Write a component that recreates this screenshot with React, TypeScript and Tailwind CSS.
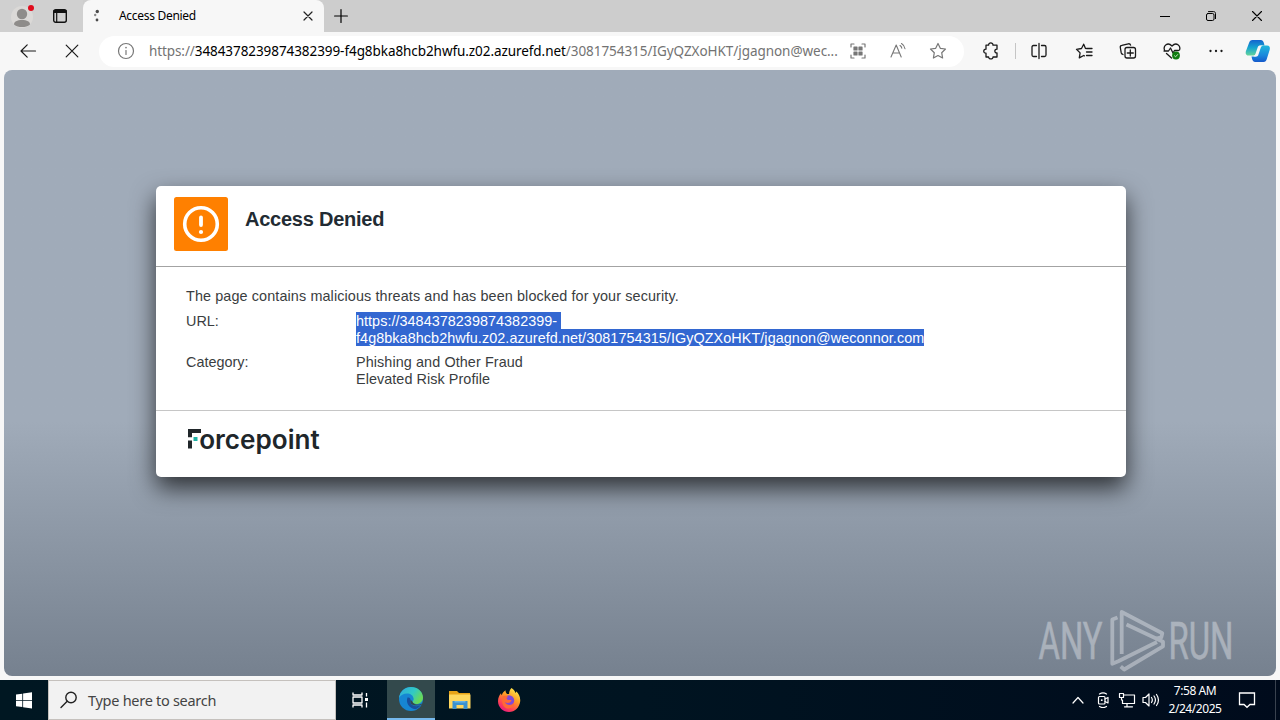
import type { ReactNode } from "react";

type IconProps = { className?: string; children: ReactNode; size?: number; stroke?: number };

function Icon({ className = "", children, size = 20, stroke = 1.2 }: IconProps) {
  return (
    <svg
      width={size}
      height={size}
      viewBox={`0 0 ${size} ${size}`}
      fill="none"
      stroke="currentColor"
      strokeWidth={stroke}
      strokeLinecap="round"
      strokeLinejoin="round"
      className={`block shrink-0 ${className}`}
    >
      {children}
    </svg>
  );
}

function TabStrip() {
  return (
    <div className="flex h-8 bg-[#cdcdcd]">
      <div className="flex w-[83px] items-center bg-[#d0d0d0] pl-[10px]">
        <svg width="26" height="28" viewBox="0 0 26 28" className="block">
          <circle cx="12" cy="15" r="11" fill="#dbd9d7" />
          <circle cx="12" cy="12" r="5.200" fill="#8e8c8a" />
          <path d="M4 22.500c0-3 3-4.500 8-4.500s8 1.500 8 4.500c-2 2-5 2.600-8 2.600s-6-.6-8-2.600z" fill="#8e8c8a" />
          <circle cx="21" cy="6" r="3" fill="#e00b1c" />
        </svg>
        <svg width="16" height="16" viewBox="0 0 16 16" className="ml-4 block" fill="none" stroke="#111">
          <rect x="1.700" y="1.700" width="12.600" height="12.600" rx="2" strokeWidth="1.400" />
          <path d="M1.500 3.500h13" strokeWidth="3" />
          <path d="M4.700 5v9" strokeWidth="1.200" />
        </svg>
      </div>
      <div className="flex w-[241px] items-center rounded-t-lg bg-[#f7f7f7] pl-[10px] pr-[11px]">
        <svg width="8" height="14" viewBox="0 0 8 14" className="block" fill="#4a4a4a">
          <circle cx="4.300" cy="2.500" r="1.700" />
          <circle cx="2.200" cy="6" r="1.200" fill="#888" />
          <circle cx="4" cy="11" r="1.400" />
        </svg>
        <span className="ml-[18px] flex-1 text-[12px] tracking-[-0.3px] text-black">Access Denied</span>
        <Icon size={10} stroke={1.2} className="text-[#222]">
          <path d="M1 1l8 8M9 1L1 9" />
        </Icon>
      </div>
      <Icon size={14} stroke={1.2} className="ml-[10px] mt-[9px] text-black">
        <path d="M7 .6v12.800M.6 7h12.800" />
      </Icon>
      <div className="ml-auto flex items-center gap-9 pr-[18px] text-black">
        <Icon size={10} stroke={1}>
          <path d="M0 5.500h10" />
        </Icon>
        <Icon size={10} stroke={1}>
          <rect x=".5" y="2.500" width="7.500" height="7" rx="1.500" />
          <path d="M2.500 .6h5c1.300 0 2 .7 2 2v5" />
        </Icon>
        <Icon size={10} stroke={1.1}>
          <path d="M.5 .5l9 9M9.500 .5l-9 9" />
        </Icon>
      </div>
    </div>
  );
}

function AddressBar() {
  return (
    <div className="ml-[19px] flex h-[31px] w-[865px] items-center rounded-full bg-white pl-[18px] pr-4 text-[#777]">
      <Icon size={18} stroke={1.2}>
        <circle cx="9" cy="9" r="7.500" />
        <path d="M9 8.500v4" />
        <path d="M9 5.600v.1" strokeWidth="1.600" />
      </Icon>
      <div className="ml-[14px] w-[692px] whitespace-nowrap text-[13.500px] leading-5 text-[#737373]">
        <span className="tracking-[-0.1px]">https://</span>
        <span className="tracking-[-0.07px] text-black">3484378239874382399-f4g8bka8hcb2hwfu.z02.azurefd.net</span>
        <span className="tracking-[-0.05px]">/3081754315/IGyQZXoHKT/jgagnon@wec...</span>
      </div>
      <Icon size={16} stroke={1.2} className="ml-[9px]">
        <path d="M1 4V1h3M12 1h3v3M15 12v3h-3M4 15H1v-3" />
        <path d="M4 4h3v3H4zM9 4h3v3H9zM4 9h3v3H4zM9 9h3v3H9z" fill="currentColor" />
      </Icon>
      <Icon size={18} stroke={1.1} className="ml-6">
        <path d="M1 15L6.200 3l5 12M2.800 11h6.700" />
        <path d="M10 3.500c1 .7 1.600 1.500 1.800 2.700M11.500 1.500c2 1.200 3.200 3 3.500 5.200" />
      </Icon>
      <Icon size={18} stroke={1.2} className="ml-[21px]">
        <path d="M9 1.500l2.300 4.800 5.200.7-3.800 3.700.9 5.300L9 13.500 4.400 16l.9-5.300L1.500 7l5.200-.7z" />
      </Icon>
    </div>
  );
}

function CopilotIcon() {
  return (
    <svg width="26" height="24" viewBox="0 0 26 24" className="block">
      <defs>
        <linearGradient id="cp1" x1="0" y1="0" x2="0" y2="1">
          <stop offset="0" stopColor="#1464cf" />
          <stop offset=".5" stopColor="#16a5cf" />
          <stop offset="1" stopColor="#67d59a" />
        </linearGradient>
        <linearGradient id="cp2" x1="0" y1="0" x2="0" y2="1">
          <stop offset="0" stopColor="#20b8dc" />
          <stop offset=".6" stopColor="#1a87dc" />
          <stop offset="1" stopColor="#1559cb" />
        </linearGradient>
      </defs>
      <path d="M7.500 1h8.200c2 0 2.800 1.500 3.200 3l.6 2.500h-3c-2 0-2.600 1-3.100 2.600l-2 5c-.6 1.800-1.500 2.500-3.100 2.500H4c-2.500 0-3.900-1.700-3.200-4.200L4 4C4.600 2.100 5.600 1 7.500 1z" fill="url(#cp1)" />
      <path d="M18.500 23h-8.200c-2 0-2.800-1.500-3.200-3l-.6-2.400h3c2 0 2.600-1 3.100-2.600l2-6c.6-1.800 1.500-2.500 3.100-2.500H22c2.500 0 3.400 1.700 2.700 4.200L21.800 20c-.6 1.900-1.400 3-3.300 3z" fill="url(#cp2)" />
      <path d="M10.500 14.800L12.800 8c.5-1 1.100-1.500 2.200-1.500h3c-1.500.5-2 1.400-2.400 2.700L13.300 16c-.5 1-1.200 1.600-2.400 1.600H8c1.300-.4 1.900-1.400 2.500-2.800z" fill="#f7f7f7" />
    </svg>
  );
}

function Toolbar() {
  return (
    <div className="flex h-[38px] items-center bg-[#f7f7f7] pl-[19px] text-[#1a1a1a]">
      <Icon size={18} stroke={1.2}>
        <path d="M16.500 9H2M8.200 2.800L2 9l6.200 6.200" />
      </Icon>
      <Icon size={14} stroke={1.2} className="ml-7">
        <path d="M1.200 1.200l11.600 11.600M12.800 1.200L1.200 12.800" />
      </Icon>
      <div className="ml-px">
        <AddressBar />
      </div>
      <Icon size={18} stroke={1.3} className="ml-[18px]">
        <path d="M4 3.200h2.600c-.2-3 4.600-3 4.400 0h4v4c-2.900-.2-2.900 4 0 3.800v4H11c.2 2.500-4.400 2.500-4.400 0H4v-3.800C1 11.400 1 7 4 7.200z" />
      </Icon>
      <div className="ml-[15px] h-4 w-px bg-[#c5c5c5]" />
      <Icon size={18} stroke={1.300} className="ml-[14px]">
        <path d="M6.500 3.500h-3c-1 0-1.500.5-1.500 1.500v8c0 1 .5 1.500 1.500 1.500h3M11.500 3.500h3c1 0 1.500.5 1.500 1.500v8c0 1-.5 1.500-1.500 1.500h-3M9 1.500v15" />
      </Icon>
      <Icon size={18} stroke={1.3} className="ml-[27px]">
        <path d="M10.500 6.500L8.700 2.200 6.500 6.500l-5 .8 3.600 3.600-.8 5 4.400-2.400.7.400M11.500 6.500H17M11.500 10H17M11.500 13.500H17" />
      </Icon>
      <Icon size={18} stroke={1.3} className="ml-[26px]">
        <path d="M4 12.500c-1-.3-1.500-.8-1.800-1.800L1.300 5.500c-.2-1.200.4-2 1.500-2.200l6.500-1.500c1.200-.2 2 .3 2.300 1.400M8 5.500h6.500c1.200 0 2 .8 2 2V14c0 1.200-.8 2-2 2H8c-1.200 0-2-.8-2-2V7.500c0-1.200.8-2 2-2zM11.300 8v6M8.300 11h6" />
      </Icon>
      <Icon size={18} stroke={1.3} className="ml-[26px]">
        <path d="M1.500 8C0 4 4.500-.5 9 4c4.500-4.500 9 0 7.500 4M1 9h4.500l2-3 2.500 5 1.500-2.500h4M3.500 11.500L8.500 16" />
        <circle cx="13" cy="13.500" r="3.900" fill="#107c10" stroke="none" />
        <path d="M11.500 13.800l1.100 1 2-2.200" stroke="#c8e5c8" strokeWidth="1" />
      </Icon>
      <Icon size={18} stroke={2.300} className="ml-[26px]">
        <path d="M3.500 9h.01M9 9h.01M14.500 9h.01" />
      </Icon>
      <div className="ml-5">
        <CopilotIcon />
      </div>
    </div>
  );
}

function ForcepointLogo() {
  return (
    <svg width="140" height="36" viewBox="0 0 140 36" className="block overflow-visible">
      <path d="M1 4h13v4H5v4.200H1zM1 15.500h4V23.500H1z" fill="#20262a" />
      <rect x="6.500" y="12" width="4" height="4" fill="#1fb2a5" />
      <text
        x="12.200"
        y="23.500"
        textLength="120.500"
        lengthAdjust="spacingAndGlyphs"
        fill="#20262a"
        className="font-['Inter','Liberation_Sans',sans-serif] text-[26px] font-semibold"
      >
        orcepoint
      </text>
    </svg>
  );
}

function BlockCard() {
  return (
    <div className="h-[290.500px] w-[970.500px] rounded-[5px] bg-white font-['Liberation_Sans',Arial,sans-serif] text-[14.400px] leading-[17px] text-[#3a3d40] shadow-[0_11px_24px_rgba(0,0,0,0.7)]">
      <div className="flex h-[81px] border-b border-[#a3a3a3] pl-[18.500px] pt-[11px]">
        <svg width="54" height="54" viewBox="0 0 54 54" className="block">
          <rect width="54" height="54" rx="2.500" fill="#ff8000" />
          <circle cx="27" cy="27" r="16.300" fill="none" stroke="#fff" strokeWidth="3.600" />
          <path d="M27 20.500v7.500" stroke="#fff" strokeWidth="3.800" strokeLinecap="round" />
          <circle cx="27" cy="35" r="2.100" fill="#fff" />
        </svg>
        <h1 className="ml-[17px] mt-[10px] text-[20px] font-bold leading-6 tracking-[-0.24px] text-[#222b33]">
          Access Denied
        </h1>
      </div>
      <div className="h-[144px] border-b border-[#c6c6c6] pl-[30.500px] pt-[21px]">
        <p className="tracking-[0.11px]">
          The page contains malicious threats and has been blocked for your security.
        </p>
        <div className="mt-2 flex">
          <span className="w-[170px]">URL:</span>
          <div className="-mt-px flex flex-col items-start text-white">
            <span className="bg-[#3367d1] pr-1 pt-px leading-4 tracking-[0.04px]">https://3484378239874382399-</span>
            <span className="bg-[#3367d1] pt-px leading-4 tracking-[0.065px]">
              f4g8bka8hcb2hwfu.z02.azurefd.net/3081754315/IGyQZXoHKT/jgagnon@weconnor.com
            </span>
          </div>
        </div>
        <div className="mt-2 flex">
          <span className="w-[170px]">Category:</span>
          <div>
            <p className="tracking-[0.09px]">Phishing and Other Fraud</p>
            <p className="tracking-[0.06px]">Elevated Risk Profile</p>
          </div>
        </div>
      </div>
      <div className="pl-[31.500px] pt-[14px]">
        <ForcepointLogo />
      </div>
    </div>
  );
}

function Watermark() {
  return (
    <svg
      width="210"
      height="69"
      viewBox="0 0 210 69"
      className="absolute bottom-0 right-[30px] overflow-visible opacity-45"
      fill="#e2e5ea"
    >
      <g className="font-['Roboto','Liberation_Sans',sans-serif] text-[51.500px]" stroke="#e2e5ea" strokeWidth=".5">
        <text x="2.500" y="52" textLength="64" lengthAdjust="spacingAndGlyphs">ANY</text>
        <text x="132.500" y="52" textLength="65" lengthAdjust="spacingAndGlyphs">RUN</text>
      </g>
      <g fill="none" stroke="#e2e5ea" strokeWidth="3.800" strokeLinejoin="round">
        <path d="M81.500 10.500l-5.200 2v44.300l6-2.500L121 35" />
        <path d="M85.700 47V5L126.300 26.300l-1 4-6 1.500" />
        <path d="M84.700 59.500l3.500 3L127 39.300v-4.500L90.500 17.500" />
      </g>
    </svg>
  );
}

function WindowsIcon() {
  return (
    <svg width="16" height="17" viewBox="0 0 16 17" fill="#fff" className="block">
      <path d="M0 2.600L6.300 1.700V8H0zM7.100 1.600L16 .3V8H7.100zM0 8.800h6.300v6.300L0 14.200zM7.100 8.800H16v7.700l-8.900-1.300z" />
    </svg>
  );
}

function EdgeIcon() {
  return (
    <svg width="24" height="24" viewBox="0 0 24 24" className="block">
      <defs>
        <linearGradient id="edgeTop" x1="0" y1="0" x2="1" y2=".5">
          <stop offset="0" stopColor="#2fa7df" />
          <stop offset=".6" stopColor="#31c9c4" />
          <stop offset="1" stopColor="#69d957" />
        </linearGradient>
      </defs>
      <circle cx="12" cy="12" r="12" fill="#1686d3" />
      <path d="M0 11C.8 4.500 5.800 0 12 0c7 0 12 5 12 10.500 0 4-3 6.500-6.500 6.500-3 0-4.500-1.300-4-2.300 1-1.200 1.300-2.100 1.100-3.200C14.200 8.500 11.500 6.500 8 6.500 4.500 6.500 1.500 8.200 0 11z" fill="url(#edgeTop)" />
      <path d="M8.500 10.500c-2 5.500 1.500 10.500 8 11.800 2.300-1 4.200-2.400 5.500-4.300-4.500 2.300-11.500 1.300-10.500-5 .2-1-.5-3-3-2.500z" fill="#174f9e" />
      <path d="M11.500 13c-1.100 5.300 4.400 6.700 11.200 4.800.3-.8.300-1.400-.3-1.100-4 1.800-7.700.6-8.900-2-.5-.9-1.700-1.500-2-1.700z" fill="#33494c" />
    </svg>
  );
}

function FolderIcon() {
  return (
    <svg width="22" height="20" viewBox="0 0 22 20" className="block">
      <path d="M0 1h8l2 2h11v15H0z" fill="#e8a317" />
      <path d="M0 4.500h21.500V18.500H0z" fill="#ffd75e" />
      <path d="M3.500 11h15v8h-4v-4h-7v4h-4z" fill="#3a92cf" />
      <path d="M5.500 11h11v1.500h-11z" fill="#68b4e3" />
    </svg>
  );
}

function FirefoxIcon() {
  return (
    <svg width="24" height="24" viewBox="0 0 24 24" className="block">
      <defs>
        <linearGradient id="ff" x1=".8" y1="0" x2=".2" y2="1">
          <stop offset="0" stopColor="#fff14f" />
          <stop offset=".4" stopColor="#ff9a24" />
          <stop offset=".75" stopColor="#ff4055" />
          <stop offset="1" stopColor="#e31587" />
        </linearGradient>
      </defs>
      <path d="M14.500 0c2.500 1.500 3.500 3.300 4 5 .6-.2.700-1.200.5-1.800 3 2.300 4.500 6 4.200 10C22.500 19.500 17.800 24 12 24S1 19.300 1 13.200c0-3.500 1.300-6 3-8 .1 1 .4 1.600.8 2C5.500 5 6.800 3.300 8.600 2.300c-.2 1.500.4 2.800 1.500 3.700h2C12 4 12.800 1.500 14.500 0z" fill="url(#ff)" />
      <circle cx="12" cy="12.500" r="5.200" fill="#8149d8" />
      <path d="M5.500 8.500c2-1.300 4.300-.8 5.800.5-2 .3-2.200 1.500-1 2.500 1.500 1 3 0 4.300.8-1 2.800-4.500 3.300-6.800 1.700 1.500 3.500 6.500 4 9 1 1.200 3-1.800 5.500-5.500 5.500C7 20.500 4 16 5.500 8.500z" fill="#ff6a34" />
    </svg>
  );
}

function Taskbar() {
  return (
    <div className="flex h-10 bg-linear-to-r from-[#001722] via-[#001421] to-[#000b1c] text-white">
      <div className="flex w-12 items-center justify-center">
        <WindowsIcon />
      </div>
      <div className="flex w-[288px] items-center border border-[#c5c1bd] bg-[#f2f2f2] pl-[11px] text-[#222]">
        <Icon size={18} stroke={1.4} className="text-[#222]">
          <circle cx="11" cy="6.500" r="5.200" />
          <path d="M7.200 10.300L1 16.500" />
        </Icon>
        <span className="ml-[10px] text-[14.500px] leading-5 tracking-[-0.28px] text-[#444]">Type here to search</span>
      </div>
      <div className="flex w-[51px] items-center justify-center pr-[3px]">
        <Icon size={18} stroke={1.300}>
          <path d="M2 1.500v2.500h9V1.500M2 16.500V14h9v2.500M2 6h9v6H2zM15.500 2v3.500M15.500 11.500V16.500" strokeLinecap="butt" />
          <path d="M14 7h3v3h-3z" fill="currentColor" stroke="none" />
        </Icon>
      </div>
      <div className="flex w-12 items-center justify-center border-b-2 border-[#76b9ed] bg-[#33494c]">
        <EdgeIcon />
      </div>
      <div className="flex w-[50px] items-center justify-center">
        <FolderIcon />
      </div>
      <div className="flex w-12 items-center justify-center">
        <FirefoxIcon />
      </div>
      <div className="ml-auto flex items-center">
        <Icon size={12} stroke={1.2}>
          <path d="M1 9l5-5.500L11 9" />
        </Icon>
        <Icon size={16} stroke={1.2} className="ml-[11px]">
          <rect x="3.500" y="4.500" width="6.500" height="7.500" rx="1" />
          <path d="M10 7l3-1.500v5.500L10 9.500M4.500 2c2-1.300 5-1.300 7 0M4.500 14.500c2 1.300 5 1.300 7 0" />
          <path d="M6.700 8.200h.1" strokeWidth="1.800" />
        </Icon>
        <Icon size={18} stroke={1.2} className="ml-[7px]">
          <path d="M6 4h10.500v8.500h-12V9M9 12.500v3M6.500 15.800h8M1.500 2.500h4v4h-4zM3.500 6.500V9" />
        </Icon>
        <Icon size={18} stroke={1.2} className="ml-[6px]">
          <path d="M1 6.500h2.500L7 3v12l-3.500-3.500H1zM9.500 6.500c1 1.500 1 3.500 0 5M12 5c1.800 2.500 1.800 5.500 0 8M14.500 3.500c2.500 3.500 2.500 7.500 0 11" />
        </Icon>
        <div className="ml-2 w-[54px] whitespace-nowrap text-center text-[12px] leading-[18px] tracking-[-0.45px]">
          <p>7:58 AM</p>
          <p>2/24/2025</p>
        </div>
        <Icon size={18} stroke={1.3} className="ml-4">
          <path d="M1.500 2h15v11.500H12L9 16.300l-3-2.800H1.500z" strokeLinejoin="miter" />
        </Icon>
        <div className="ml-[19px] h-10 w-px bg-[#39424f]" />
        <div className="w-1" />
      </div>
    </div>
  );
}

export default function App() {
  return (
    <div className="flex h-[720px] w-[1280px] flex-col overflow-hidden bg-[#f7f7f7] font-['Noto_Sans','Open_Sans',sans-serif]">
      <TabStrip />
      <Toolbar />
      <main className="relative mx-1 mb-1 h-[606px] rounded-lg bg-linear-to-b from-[#a0abb9] from-58% to-[#76818f] pl-[151.500px] pt-[116px]">
        <BlockCard />
        <Watermark />
      </main>
      <Taskbar />
    </div>
  );
}
